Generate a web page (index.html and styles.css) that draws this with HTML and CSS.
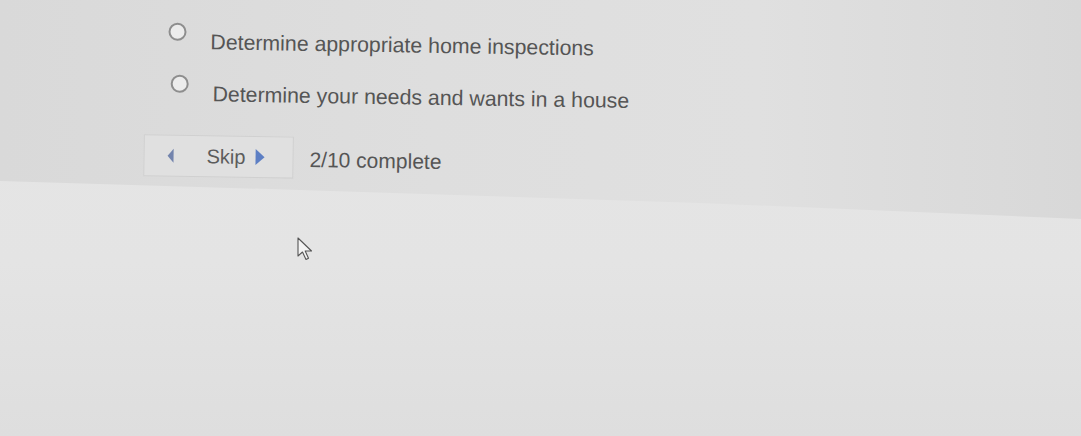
FILE: index.html
```html
<!DOCTYPE html>
<html>
<head>
<meta charset="utf-8">
<link rel="stylesheet" href="styles.css">
</head>
<body>
<div class="screen">
  <div class="panel">
    <div class="content">
      <div class="option">
        <span class="radio"></span>
        <span class="label">Determine appropriate home inspections</span>
      </div>
      <div class="option second">
        <span class="radio"></span>
        <span class="label">Determine your needs and wants in a house</span>
      </div>
      <div class="nav">
        <div class="navbox">
          <svg class="arrow" width="10" height="16" viewBox="0 0 10 16"><path d="M8 1 L2 8 L8 15 Z" fill="#7384ad"/></svg>
          <span class="skip">Skip</span>
          <svg class="arrow" width="13" height="18" viewBox="0 0 13 18"><path d="M2 1 L11 9 L2 17 Z" fill="#5d7fc4"/></svg>
        </div>
        <span class="progress">2/10 complete</span>
      </div>
    </div>
  </div>
  <div class="lower"></div>
  <svg class="cursor" width="20" height="26" viewBox="0 0 20 26"><path d="M2 2 L2 20 L6.5 16 L10 23.5 L12.5 22.3 L9.2 15 L15.5 15 Z" fill="#f4f4f4" stroke="#555" stroke-width="1.1" stroke-linejoin="round"/></svg>
</div>
</body>
</html>
```
FILE: styles.css
```css
html, body {
  margin: 0;
  padding: 0;
  width: 1081px;
  height: 436px;
  overflow: hidden;
}
body {
  font-family: "Liberation Sans", Arial, sans-serif;
  background: #e3e3e3;
}
.screen {
  position: relative;
  width: 1081px;
  height: 436px;
  background: linear-gradient(90deg, #d9d9d9 0%, #dedede 40%, #e0e0e0 70%, #d8d8d8 100%);
}
.panel {
  height: 200px;
}
.content {
  padding: 20px 0 0 169px;
  transform: rotate(0.9deg);
  transform-origin: 0 0;
}
.option {
  display: flex;
  align-items: flex-start;
  gap: 24px;
}
.option.second {
  margin-top: 21px;
  margin-left: 3px;
}
.radio {
  width: 18px;
  height: 18px;
  border-radius: 50%;
  border: 2px solid #8e8e8e;
  background: #ececec;
  box-sizing: border-box;
  flex: none;
}
.label {
  font-size: 21.3px;
  line-height: 24px;
  color: #555555;
  margin-top: 7px;
}
.nav {
  display: flex;
  align-items: center;
  gap: 16px;
  margin-top: 29px;
  margin-left: -23px;
}
.navbox {
  display: flex;
  align-items: center;
  width: 150px;
  height: 42px;
  box-sizing: border-box;
  border: 1.5px solid #d0d0d0;
  background: #e0e0e0;
  padding-left: 21px;
}
.skip {
  font-size: 20px;
  color: #5c5c5c;
  margin-left: 31px;
  margin-right: 8px;
}
.progress {
  font-size: 21px;
  color: #555555;
  margin-top: 4px;
}
.lower {
  position: absolute;
  left: 0;
  top: 0;
  width: 1081px;
  height: 436px;
  background: linear-gradient(180deg, #e6e6e6 0%, #e4e4e4 60%, #dedede 100%);
  clip-path: polygon(0 181px, 300px 190px, 700px 203px, 1081px 219px, 1081px 436px, 0 436px);
}
.cursor {
  position: absolute;
  left: 296px;
  top: 236px;
}
```
